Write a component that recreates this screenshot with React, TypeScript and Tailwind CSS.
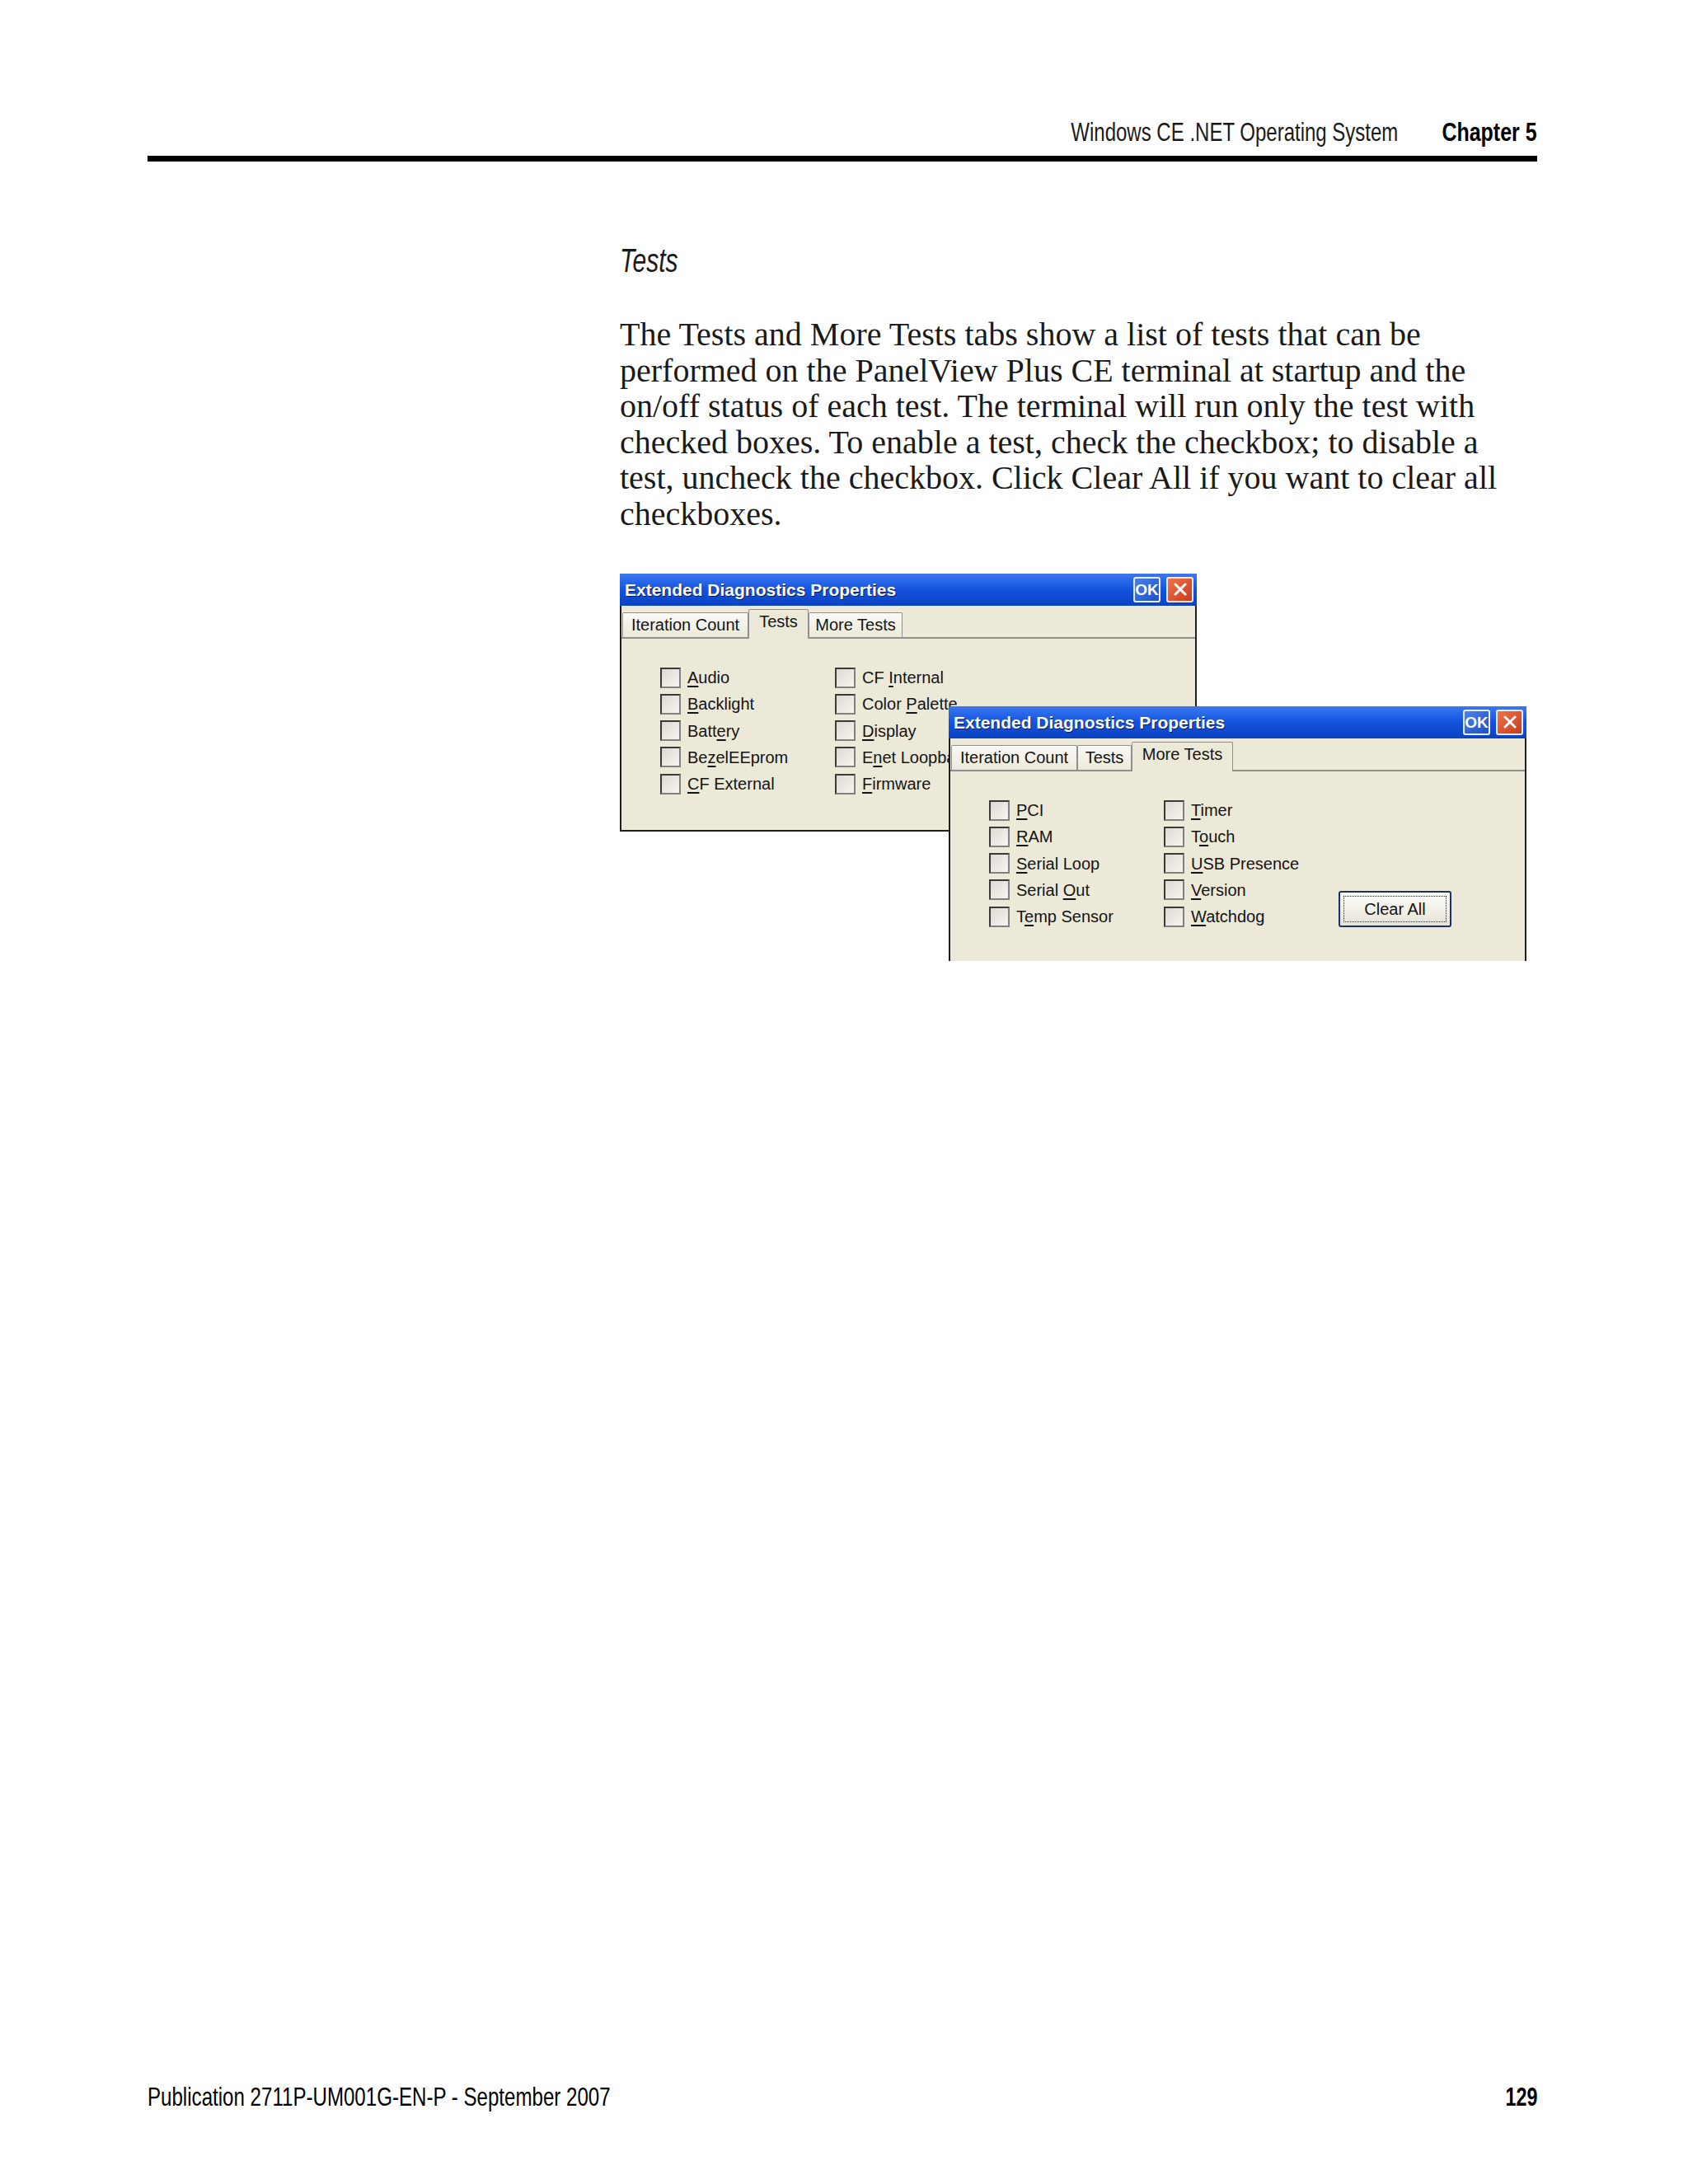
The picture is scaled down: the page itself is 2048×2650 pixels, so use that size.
import React from 'react'

type Item = [string, string, string]

type Column = {
  width: number
  items: Item[]
}

const sans = "font-['Liberation_Sans',Arial,sans-serif]"

const CheckItem = ({ item }: { item: Item }) => (
  <div className="flex h-[25px] items-center gap-[8px]">
    <span className="h-[25px] w-[25px] shrink-0 border-2 border-t-[#3a3a3a] border-l-[#3a3a3a] border-r-[#808080] border-b-[#808080] bg-gradient-to-br from-[#dcdad2] to-[#f6f5f1]" />
    <span className="whitespace-nowrap text-[20px] leading-none text-[#141414]">
      {item[0]}
      <u className="underline-offset-[3px]">{item[1]}</u>
      {item[2]}
    </span>
  </div>
)

type Tab = { label: string; width: number }

type DialogProps = {
  tabs: Tab[]
  active: number
  columns: Column[]
  clearAll?: boolean
  cut?: boolean
}

const Dialog = ({ tabs, active, columns, clearAll, cut }: DialogProps) => (
  <div className={`flex h-full w-full flex-col ${sans}`}>
    <div className="flex h-[39px] shrink-0 items-center justify-between bg-gradient-to-b from-[#3a78f0] via-[#1452de] to-[#0a42c0] pl-[6px] pr-[4px]">
      <span className="whitespace-nowrap text-[21px] font-bold leading-none text-white [text-shadow:1px_1px_0_#0a1a5c]">
        Extended Diagnostics Properties
      </span>
      <div className="flex gap-[7px]">
        <span className="flex h-[31px] w-[33px] items-center justify-center rounded-[3px] border-2 border-[#e8eefc] bg-gradient-to-br from-[#4a82ee] to-[#1f4fc4] text-[19px] font-bold leading-none text-white">
          OK
        </span>
        <span className="flex h-[31px] w-[33px] items-center justify-center rounded-[3px] border-2 border-[#f4e6e0] bg-gradient-to-br from-[#f0734a] to-[#c8391a]">
          <svg width="16" height="16" viewBox="0 0 16 16">
            <path d="M2 2 L14 14 M14 2 L2 14" stroke="#fff" strokeWidth="3" strokeLinecap="round" />
          </svg>
        </span>
      </div>
    </div>

    <div className={`flex flex-1 flex-col border-x-2 border-[#1e1e1e] bg-[#ece9d8] ${cut ? '' : 'border-b-2'}`}>
      <div className="flex h-[40px] shrink-0 items-end border-b-2 border-[#8f8f8f] pl-[1px]">
        {tabs.map((tab, i) =>
          i === active ? (
            <div
              key={tab.label}
              style={{ width: tab.width }}
              className="relative z-10 -mb-[2px] flex h-[36px] items-start justify-center rounded-t-[2px] border-x border-t border-x-[#8f8f8f] border-t-[#8f8f8f] bg-[#ece9d8] pt-[4px] text-[20px] leading-none text-[#141414]"
            >
              {tab.label}
            </div>
          ) : (
            <div
              key={tab.label}
              style={{ width: tab.width }}
              className="flex h-[30px] items-center justify-center rounded-t-[2px] border-x border-t border-x-[#8f8f8f] border-t-[#8f8f8f] bg-gradient-to-b from-[#fbfaf6] to-[#ece9d8] text-[20px] leading-none text-[#141414]"
            >
              {tab.label}
            </div>
          )
        )}
      </div>

      <div className="flex items-end self-start pt-[35px] pl-[47px]">
        {columns.map((col, ci) => (
          <div key={ci} style={{ width: col.width }} className="flex flex-col gap-[7.3px]">
            {col.items.map((item) => (
              <CheckItem key={item.join('')} item={item} />
            ))}
          </div>
        ))}
        {clearAll && (
          <div className="flex h-[44px] w-[137px] items-center justify-center rounded-[3px] border-2 border-[#1c2f6e] bg-gradient-to-b from-[#fdfdfb] to-[#e6e3d6] p-[4px]">
            <span className="flex h-full w-full items-center justify-center border border-dotted border-[#222] text-[20px] leading-none text-[#141414]">
              Clear All
            </span>
          </div>
        )}
      </div>
    </div>
  </div>
)

const testsColumns: Column[] = [
  {
    width: 212,
    items: [
      ['', 'A', 'udio'],
      ['', 'B', 'acklight'],
      ['Batt', 'e', 'ry'],
      ['Be', 'z', 'elEEprom'],
      ['', 'C', 'F External'],
    ],
  },
  {
    width: 226,
    items: [
      ['CF ', 'I', 'nternal'],
      ['Color ', 'P', 'alette'],
      ['', 'D', 'isplay'],
      ['E', 'n', 'et Loopback'],
      ['', 'F', 'irmware'],
    ],
  },
  {
    width: 200,
    items: [
      ['', 'G', 'PIO/LED'],
      ['KEYPAD', '', ''],
    ],
  },
]

const moreColumns: Column[] = [
  {
    width: 212,
    items: [
      ['', 'P', 'CI'],
      ['', 'R', 'AM'],
      ['', 'S', 'erial Loop'],
      ['Serial ', 'O', 'ut'],
      ['T', 'e', 'mp Sensor'],
    ],
  },
  {
    width: 212,
    items: [
      ['', 'T', 'imer'],
      ['T', 'o', 'uch'],
      ['', 'U', 'SB Presence'],
      ['', 'V', 'ersion'],
      ['', 'W', 'atchdog'],
    ],
  },
]

const bodyLines = [
  'The Tests and More Tests tabs show a list of tests that can be',
  'performed on the PanelView Plus CE terminal at startup and the',
  'on/off status of each test. The terminal will run only the test with',
  'checked boxes. To enable a test, check the checkbox; to disable a',
  'test, uncheck the checkbox. Click Clear All if you want to clear all',
  'checkboxes.',
]

export default function App() {
  return (
    <div className="flex h-[2650px] w-[2048px] flex-col bg-white pt-[144px] pr-[183px] pb-[90px] pl-[179px] text-black">
      {/* running header, condensed like the print face */}
      <div className={`flex items-baseline justify-end gap-[21px] text-[32px] leading-none ${sans}`}>
        <span className="inline-block origin-right scale-x-[0.75] whitespace-nowrap text-[#1a1a1a]">
          Windows CE .NET Operating System
        </span>
        <span className="inline-block origin-right scale-x-[0.78] whitespace-nowrap font-bold">Chapter 5</span>
      </div>
      <div className="mt-[13px] h-[7px] bg-black" />

      <div className="ml-[573px] flex flex-col">
        <h2 className={`mt-[100px] text-[40px] font-normal italic leading-none text-[#1a1a1a] ${sans}`}>
          <span className="inline-block origin-left scale-x-[0.75]">Tests</span>
        </h2>

        <div className="mt-[48px] font-['Liberation_Serif',serif] text-[40px] leading-[43.6px] text-[#1a1a1a]">
          {bodyLines.map((line) => (
            <div key={line} className="whitespace-nowrap">
              {line}
            </div>
          ))}
        </div>

        <div className="relative mt-[50px] h-[470px] w-[1100px]">
          <div className="absolute left-0 top-0 h-[313px] w-[700px]">
            <Dialog
              tabs={[
                { label: 'Iteration Count', width: 153 },
                { label: 'Tests', width: 73 },
                { label: 'More Tests', width: 114 },
              ]}
              active={1}
              columns={testsColumns}
            />
          </div>
          <div className="absolute left-[399px] top-[161px] h-[309px] w-[701px] bg-[#ece9d8]">
            <Dialog
              tabs={[
                { label: 'Iteration Count', width: 153 },
                { label: 'Tests', width: 66 },
                { label: 'More Tests', width: 123 },
              ]}
              active={2}
              columns={moreColumns}
              clearAll
              cut
            />
          </div>
        </div>
      </div>

      <div className={`mt-auto flex items-baseline justify-between text-[32px] leading-none ${sans}`}>
        <span className="inline-block origin-left scale-x-[0.753] whitespace-nowrap">
          Publication 2711P-UM001G-EN-P - September 2007
        </span>
        <span className="inline-block origin-right scale-x-[0.73] font-bold">129</span>
      </div>
    </div>
  )
}
